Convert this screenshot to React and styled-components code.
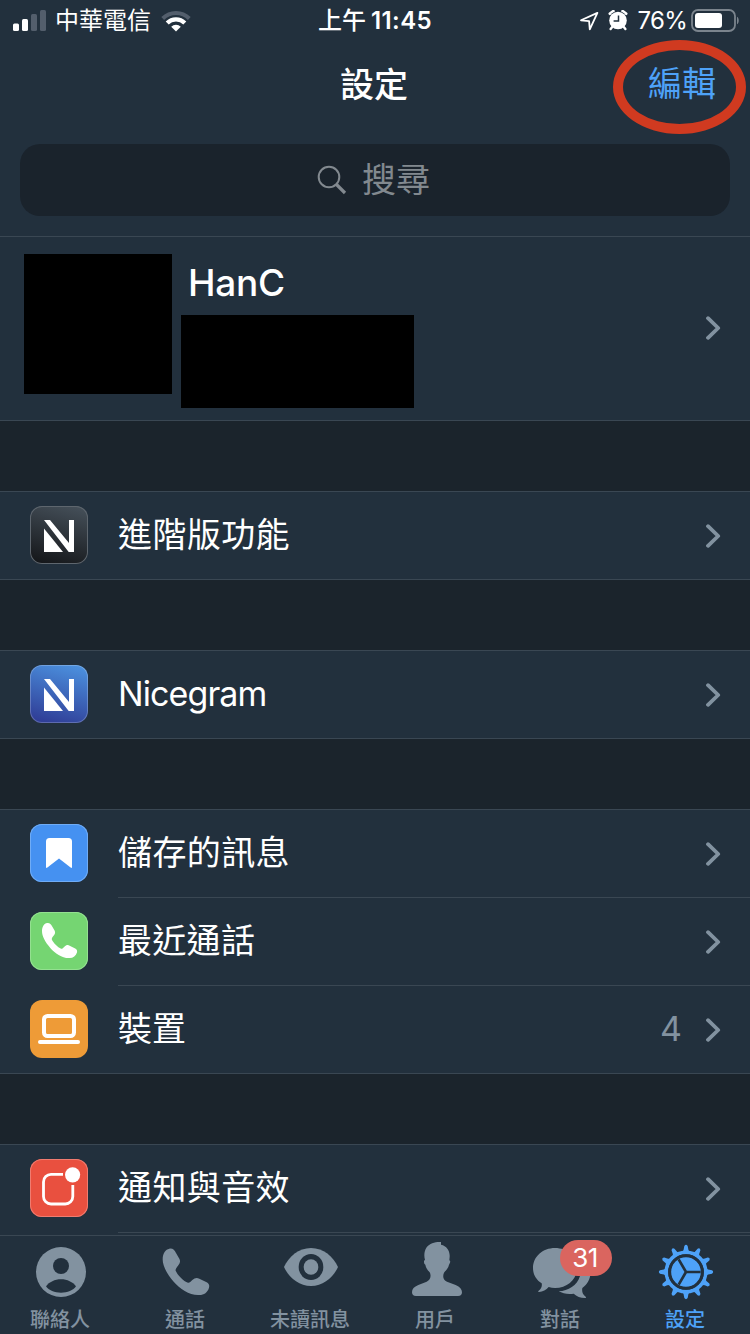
import React from "react";
import styled, { createGlobalStyle } from "styled-components";

const c = {
  panel: "#22303d",
  gap: "#1b242c",
  field: "#1a232c",
  line: "#3a4753",
  muted: "#8292a0",
  hint: "#82898f",
  blue: "#4ea2f8",
};

const Global = createGlobalStyle`
  * { box-sizing: border-box; }
  body { margin: 0; background: ${c.gap}; }
`;

const Screen = styled.div`
  width: 750px;
  height: 1334px;
  overflow: hidden;
  display: flex;
  flex-direction: column;
  background: ${c.gap};
  color: #fff;
  font-family: Inter, "Noto Sans CJK TC", sans-serif;
`;

const Header = styled.header`
  flex: none;
  height: 236px;
  background: ${c.panel};
`;

const StatusBar = styled.div`
  height: 40px;
  display: grid;
  grid-template-columns: 1fr auto 1fr;
  align-items: center;
  padding: 0 11px 0 13px;
  font-size: 24px;
  line-height: 40px;
`;

const StatusGroup = styled.div`
  display: flex;
  align-items: center;
  justify-content: ${(p) => (p.$end ? "flex-end" : "flex-start")};
  height: 40px;
`;

const Carrier = styled.span`
  margin: 1px 10px 0 9px;
  font-weight: 400;
`;

const Clock = styled.span`
  padding-top: 1px;
  margin-right: 2px;
  font-weight: 600;
  letter-spacing: 0.4px;
  white-space: nowrap;
`;

const Meridiem = styled.span`
  font-weight: 500;
  letter-spacing: 0;
  margin-right: 5px;
`;

const LocationSlot = styled.span`
  display: flex;
  margin-right: 9px;
`;

const Percent = styled.span`
  margin: 1px 4px 0 9px;
  letter-spacing: -0.7px;
`;

const NavBar = styled.nav`
  height: 88px;
  display: grid;
  grid-template-columns: 1fr auto 1fr;
  align-items: center;
  font-size: 34px;
  line-height: 88px;
`;

const NavTitle = styled.h1`
  grid-column: 2;
  margin: 0;
  padding: 1px 2px 0 0;
  height: 88px;
  font-size: 34px;
  font-weight: 500;
`;

const EditButton = styled.button`
  position: relative;
  justify-self: end;
  margin-right: 34px;
  padding: 0;
  border: 0;
  background: none;
  color: ${c.blue};
  font: inherit;
  font-weight: 400;
  line-height: 88px;
`;

const Ring = styled.span`
  position: absolute;
  left: -35px;
  top: 0;
  width: 133px;
  height: 94px;
  border: 10px solid #d03a20;
  border-radius: 50%;
`;

const Search = styled.div`
  height: 72px;
  margin: 16px 20px 0;
  border-radius: 20px;
  background: ${c.field};
  color: ${c.hint};
  display: flex;
  align-items: center;
  justify-content: center;
  gap: 15px;
  font-size: 34px;
  font-weight: 400;
  line-height: 72px;
  padding-right: 3px;
`;

const List = styled.main`
  flex: 1;
  min-height: 0;
  overflow: hidden;
  display: flex;
  flex-direction: column;
  gap: 70px;
`;

const Section = styled.section`
  flex: none;
  background: ${c.panel};
  border-top: 1px solid ${c.line};
  border-bottom: 1px solid ${c.line};
`;

const Profile = styled.div`
  height: 183px;
  display: flex;
  align-items: flex-start;
  padding: 17px 29px 0 24px;
`;

const Avatar = styled.div`
  width: 148px;
  height: 140px;
  background: #000;
`;

const ProfileInfo = styled.div`
  flex: 1;
  margin-left: 9px;
`;

const Name = styled.div`
  height: 61px;
  padding-left: 7px;
  font-size: 37px;
  font-weight: 500;
  letter-spacing: -0.3px;
  line-height: 57px;
`;

const Redaction = styled.div`
  width: 233px;
  height: 93px;
  background: #000;
`;

const ProfileChevron = styled.div`
  display: flex;
  padding-top: 62px;
`;

const Row = styled.div`
  display: flex;
  height: ${(p) => (p.$last ? 87 : 88)}px;
  padding-left: 30px;
`;

const Tile = styled.div`
  width: 58px;
  height: 58px;
  margin-top: 14px;
  flex: none;
  border-radius: 12px;
  background: ${(p) => p.$bg};
  box-shadow: inset 0 0 0 1px ${(p) => p.$edge || "transparent"};
  display: flex;
`;

const RowBody = styled.div`
  flex: 1;
  display: flex;
  align-items: center;
  margin-left: 30px;
  padding-right: 29px;
  border-bottom: ${(p) => (p.$last ? "0" : `1px solid ${c.line}`)};
`;

const Label = styled.span`
  flex: 1;
  font-size: 34px;
  font-weight: 400;
  line-height: 86px;
  height: 87px;
  letter-spacing: ${(p) => p.$track || 0}px;
`;

const Value = styled.span`
  color: ${c.muted};
  font-size: 34px;
  line-height: 85px;
  height: 87px;
  margin-right: 24px;
`;

const TabBar = styled.footer`
  flex: none;
  height: 99px;
  border-top: 1px solid ${c.line};
  background: ${c.panel};
  display: flex;
`;

const Tabs = styled.div`
  display: flex;
  margin-left: -2px;
`;

const Tab = styled.div`
  position: relative;
  width: 125px;
  display: flex;
  flex-direction: column;
  align-items: center;
  color: ${(p) => (p.$active ? c.blue : c.muted)};
`;

const TabLabel = styled.span`
  margin-top: 3px;
  padding-right: 1px;
  font-size: 20px;
  font-weight: 500;
  line-height: 34px;
`;

const Badge = styled.span`
  position: absolute;
  left: 62px;
  top: 4px;
  width: 52px;
  height: 36px;
  border-radius: 18px;
  background: #da655f;
  color: #fff;
  font-size: 26px;
  line-height: 35px;
  letter-spacing: -0.5px;
  text-align: center;
  padding-right: 2px;
`;

const Chevron = () => (
  <svg width="15" height="24" viewBox="0 0 15 24" style={{ display: "block" }} fill="none" stroke={c.muted} strokeWidth="3.8" strokeLinecap="round" strokeLinejoin="round">
    <path d="M2 2.2 12.2 12 2 21.8" />
  </svg>
);

const Signal = () => (
  <svg width="33" height="22" viewBox="0 0 33 22">
    <rect x="0" y="13.5" width="6" height="7.5" rx="1.5" fill="#fff" />
    <rect x="9" y="9" width="6" height="12" rx="1.5" fill="#fff" />
    <rect x="18" y="4" width="6" height="17" rx="1.5" fill="#535e6c" />
    <rect x="27" y="0" width="6" height="21" rx="1.5" fill="#535e6c" />
  </svg>
);

const Wifi = () => (
  <svg width="30" height="22" viewBox="0 0 30 22" fill="none" strokeWidth="4">
    <path d="M1.7 8.5a19 19 0 0 1 26.6 0" stroke="#535e6c" />
    <path d="M6.2 13.1a12.4 12.4 0 0 1 17.6 0" stroke="#fff" strokeWidth="4.2" />
    <path d="M15 21.5l-4.8-4.8a6.8 6.8 0 0 1 9.6 0z" fill="#fff" />
  </svg>
);

const Location = () => (
  <svg width="20" height="20" viewBox="0 0 20 20" fill="none" stroke="#fff" strokeWidth="1.8" strokeLinejoin="round">
    <path d="M18.4 1.9 2 9.3l8.1.9.7 8.2z" />
  </svg>
);

const Alarm = () => (
  <svg width="20" height="22" viewBox="0 0 20 22">
    <g stroke="#fff" strokeLinecap="round" fill="none">
      <path d="M2 3.7 5.4 1.3M18 3.7 14.6 1.3" strokeWidth="3" />
    </g>
    <circle cx="10" cy="10.5" r="9.4" fill={c.panel} />
    <path d="M4.2 17 2.6 19.1M15.8 17l1.6 2.1" stroke="#fff" strokeWidth="2.4" strokeLinecap="round" />
    <circle cx="10" cy="10.5" r="8.8" fill="#fff" />
    <path d="M10.5 5.5v5.6H5.6" fill="none" stroke={c.panel} strokeWidth="1.5" />
  </svg>
);

const Battery = () => (
  <svg width="48" height="24" viewBox="0 0 48 24">
    <rect x="1" y="1" width="43" height="21" rx="6" fill="none" stroke="#7b848d" strokeWidth="1.8" />
    <rect x="4" y="4" width="27" height="15" rx="3" fill="#fff" />
    <path d="M46 7.7c2.3 1.2 2.3 6.4 0 7.6z" fill="#7b848d" />
  </svg>
);

const SearchGlyph = () => (
  <svg width="30" height="30" viewBox="0 0 30 30" fill="none" stroke={c.hint}>
    <circle cx="12" cy="12" r="10.3" strokeWidth="2" />
    <path d="M19.5 19.5 28 28" strokeWidth="3.2" />
  </svg>
);

const NLogo = () => (
  <svg width="58" height="58" viewBox="0 0 58 58" fill="#fff">
    <path d="M14 14h6l19 23V14h5v32h-5.3z" />
    <path d="M14 22.6 33 46H14z" />
  </svg>
);

const BookmarkGlyph = () => (
  <svg width="58" height="58" viewBox="0 0 58 58" fill="#fff">
    <path d="M19.5 14h19a3.5 3.5 0 0 1 3.5 3.5v25.6q0 1.6-1.4.5L29 34.5l-11.6 9.1q-1.4 1.1-1.4-.5V17.5a3.5 3.5 0 0 1 3.5-3.5z" />
  </svg>
);

const PHONE =
  "M488 88C488 70 497 58 508 56C518 54 524 61 528 69L538 86C542 94 540 100 534 107C529 113 526 118 527 122C532 134 551 154 564 158C568 159 572 155 577 150C584 144 590 142 598 146L620 157C627 161 629 166 627 173C623 187 612 195 598 195C570 197 540 177 521 155C500 131 488 108 488 88Z";

const CallGlyph = () => (
  <svg width="58" height="58" viewBox="0 0 58 58" fill="#fff">
    <path d={PHONE} transform="translate(12 11) scale(.2515) translate(-488 -56)" />
  </svg>
);

const LaptopGlyph = () => (
  <svg width="58" height="58" viewBox="0 0 58 58" fill="none" stroke="#fff" strokeWidth="4">
    <rect x="14" y="16" width="30" height="20" rx="3.5" />
    <path d="M10 42h38" strokeLinecap="round" />
  </svg>
);

const NoticeGlyph = () => (
  <svg width="58" height="58" viewBox="0 0 58 58">
    <path d="M33 15.4H21a7.5 7.5 0 0 0-7.5 7.5v14.6A7.5 7.5 0 0 0 21 45h14.3a7.5 7.5 0 0 0 7.5-7.5V26" fill="none" stroke="#fff" strokeWidth="2.8" />
    <circle cx="42.6" cy="15.8" r="7.6" fill="#fff" />
  </svg>
);

const TabGlyph = styled.svg.attrs({ width: 125, height: 64 })`
  display: block;
  flex: none;
  fill: currentColor;
`;

const LEFT = "-6 18 375 192";
const RIGHT = "369 18 375 192";

const ContactsGlyph = () => (
  <TabGlyph viewBox={LEFT}>
    <circle cx="183" cy="126" r="75" />
    <circle cx="183" cy="108" r="24" fill={c.panel} />
    <path d="M138 169C148 156 164 148 183 148S218 156 228 169C220 181 202 188 183 188S146 181 138 169Z" fill={c.panel} />
  </TabGlyph>
);

const CallsGlyph = () => (
  <TabGlyph viewBox={RIGHT}>
    <path d={PHONE} />
  </TabGlyph>
);

const EyeGlyph = () => (
  <TabGlyph viewBox={LEFT}>
    <path d="M102 111C116 80 146 54 183 54S250 80 264 111C250 142 220 168 183 168S116 142 102 111Z" />
    <ellipse cx="183" cy="111" rx="37" ry="39" fill={c.panel} />
    <ellipse cx="183" cy="111" rx="22" ry="23" />
  </TabGlyph>
);

const PersonGlyph = () => (
  <TabGlyph viewBox={RIGHT}>
    <path d="M573 36V44C590 48 600 62 599 80L598 91Q602 92 600 98L597 104C595 115 588 120 582 128C577 140 580 151 591 155L617 165C630 170 636 178 636 187Q636 198 624 198H498Q486 198 486 187C486 177 492 170 505 165L530 155C541 150 544 140 540 128C533 120 528 115 526 104Q522 102 522 97Q521 91 525 90C521 76 523 63 530 52C539 40 556 35 573 36Z" />
  </TabGlyph>
);

const ChatsGlyph = () => (
  <TabGlyph viewBox={LEFT}>
    <path d="M270 112C276 139 265 160 247 174C245 184 248 194 257 200Q260 204 255 204C241 204 230 199 221 191C203 194 188 190 176 184C205 182 231 167 240 138Z" />
    <path d="M165 54C202 54 231 80 231 114S202 174 165 174Q155 174 146 171C139 179 128 186 117 186Q112 185 116 182C124 176 127 168 125 160C108 149 99 133 99 114C99 80 128 54 165 54Z" />
  </TabGlyph>
);

const GearGlyph = () => (
  <TabGlyph viewBox={RIGHT}>
    {Array.from({ length: 12 }, (_, i) => (
      <path key={i} d="M546 68Q552 61 553 48Q558 41 563 48Q564 61 570 68Z" transform={`rotate(${i * 30} 558 126)`} />
    ))}
    <circle cx="558" cy="126" r="59" fill="none" stroke="currentColor" strokeWidth="11" />
    <circle cx="558" cy="126" r="46" />
    <path d="M602 126H558L536 88M558 126 536 164" fill="none" stroke={c.panel} strokeWidth="8" />
    <circle cx="558" cy="126" r="49" fill="none" stroke={c.panel} strokeWidth="9" />
  </TabGlyph>
);

const groups = [
  [{ label: "進階版功能", track: 0.4, bg: "linear-gradient(15deg,#15171a 5%,#47525c)", edge: "#5e666e", Glyph: NLogo }],
  [{ label: "Nicegram", track: -0.9, bg: "linear-gradient(15deg,#303f98 8%,#4d95e2)", edge: "#ffffff38", Glyph: NLogo }],
  [
    { label: "儲存的訊息", track: 0.4, bg: "#4591f1", edge: "#70acf5", Glyph: BookmarkGlyph },
    { label: "最近通話", track: 0.3, bg: "#75d572", edge: "#94e091", Glyph: CallGlyph },
    { label: "裝置", bg: "#ee9b37", value: "4", Glyph: LaptopGlyph },
  ],
  [
    { label: "通知與音效", track: 0.4, bg: "#e9503f", edge: "#f07c70", Glyph: NoticeGlyph, divided: true },
  ],
];

const tabs = [
  { label: "聯絡人", Glyph: ContactsGlyph },
  { label: "通話", Glyph: CallsGlyph },
  { label: "未讀訊息", Glyph: EyeGlyph },
  { label: "用戶", Glyph: PersonGlyph },
  { label: "對話", Glyph: ChatsGlyph, badge: "31" },
  { label: "設定", Glyph: GearGlyph, active: true },
];

const LastSection = styled(Section)`
  height: 120px;
`;

export default function App() {
  return (
    <Screen>
      <Global />
      <Header>
        <StatusBar>
          <StatusGroup>
            <Signal />
            <Carrier>中華電信</Carrier>
            <Wifi />
          </StatusGroup>
          <Clock>
            <Meridiem>上午</Meridiem>11:45
          </Clock>
          <StatusGroup $end>
            <LocationSlot>
              <Location />
            </LocationSlot>
            <Alarm />
            <Percent>76%</Percent>
            <Battery />
          </StatusGroup>
        </StatusBar>
        <NavBar>
          <NavTitle>設定</NavTitle>
          <EditButton>
            編輯
            <Ring />
          </EditButton>
        </NavBar>
        <Search>
          <SearchGlyph />
          搜尋
        </Search>
      </Header>
      <List>
        <Section>
          <Profile>
            <Avatar />
            <ProfileInfo>
              <Name>HanC</Name>
              <Redaction />
            </ProfileInfo>
            <ProfileChevron>
              <Chevron />
            </ProfileChevron>
          </Profile>
        </Section>
        {groups.map((rows, g) => {
          const Box = g === groups.length - 1 ? LastSection : Section;
          return (
            <Box key={g}>
              {rows.map(({ label, track, bg, edge, value, Glyph, divided }, i) => {
                const last = i === rows.length - 1 && !divided;
                return (
                  <Row key={label} $last={last}>
                    <Tile $bg={bg} $edge={edge}>
                      <Glyph />
                    </Tile>
                    <RowBody $last={last}>
                      <Label $track={track}>{label}</Label>
                      {value && <Value>{value}</Value>}
                      <Chevron />
                    </RowBody>
                  </Row>
                );
              })}
            </Box>
          );
        })}
      </List>
      <TabBar>
        <Tabs>
          {tabs.map(({ label, Glyph, badge, active }) => (
            <Tab key={label} $active={active}>
              <Glyph />
              {badge && <Badge>{badge}</Badge>}
              <TabLabel>{label}</TabLabel>
            </Tab>
          ))}
        </Tabs>
      </TabBar>
    </Screen>
  );
}
